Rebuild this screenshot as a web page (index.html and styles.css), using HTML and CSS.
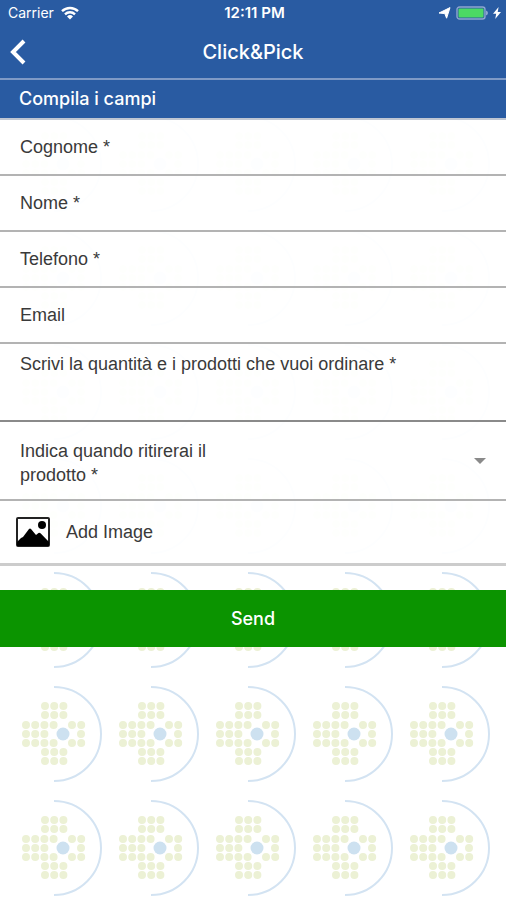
FILE: index.html
```
<!DOCTYPE html>
<html lang="it">
<head>
  <meta charset="UTF-8" />
  <meta name="viewport" content="width=device-width, initial-scale=1" />
  <title>Click&amp;Pick</title>
  <link rel="stylesheet" href="styles.css">
</head>
<body>

  <!-- Barra di stato -->
  <div class="status-bar">
    <div class="status-left">
      <span>Carrier</span>
      <svg width="18" height="14" viewBox="0 0 18 14" fill="none" stroke="#fff" stroke-width="2.4">
        <path d="M1 5.2a11.5 11.5 0 0 1 16 0" />
        <path d="M4 8.3a7.2 7.2 0 0 1 10 0" />
        <path d="M9 13.4L6 10.4a4.4 4.4 0 0 1 6 0z" fill="#fff" stroke="none" />
      </svg>
    </div>
    <span class="status-time">12:11 PM</span>
    <div class="status-right">
      <svg width="13" height="12" viewBox="0 0 13 12" fill="#fff">
        <path d="M12 .6L8.600 11.200 6.800 6.600 1 6z" stroke="#fff" stroke-width="1" stroke-linejoin="round" />
      </svg>
      <svg width="32" height="14" viewBox="0 0 32 14">
        <rect x="1" y="1" width="28" height="12" rx="2.5" fill="none" stroke="#8ea6cf" stroke-width="1.4" />
        <rect x="2.5" y="2.5" width="25" height="9" rx="1" fill="#4cd964" />
        <path d="M30 4.6q2 .6 2 2.4t-2 2.4z" fill="#8ea6cf" />
      </svg>
      <svg width="8" height="12" viewBox="0 0 8 12" fill="#fff">
        <path d="M5.6 0L0 6.8h3.2L2.2 12 8 4.9H4.7z" />
      </svg>
    </div>
  </div>

  <!-- Navigazione -->
  <header class="nav">
    <a class="back" href="#" aria-label="Indietro">
      <svg width="16" height="26" viewBox="0 0 16 26" fill="none" stroke="#fff" stroke-width="4">
        <path d="M14 2L3 13l11 11" />
      </svg>
    </a>
    <h1>Click&amp;Pick</h1>
  </header>

  <!-- Modulo -->
  <form>
    <h2 class="section-title">Compila i campi</h2>

    <div class="row">
      <label for="cognome">Cognome *</label>
      <input type="text" id="cognome" name="cognome" required>
    </div>
    <div class="row">
      <label for="nome">Nome *</label>
      <input type="text" id="nome" name="nome" required>
    </div>
    <div class="row">
      <label for="telefono">Telefono *</label>
      <input type="tel" id="telefono" name="telefono" required>
    </div>
    <div class="row">
      <label for="email">Email</label>
      <input type="email" id="email" name="email">
    </div>
    <div class="row row-text">
      <label for="ordine">Scrivi la quantità e i prodotti che vuoi ordinare *</label>
      <textarea id="ordine" name="ordine" rows="1" required></textarea>
    </div>
    <div class="row row-select">
      <label for="ritiro">Indica quando ritirerai il prodotto *</label>
      <select id="ritiro" name="ritiro" required>
        <option value=""></option>
      </select>
    </div>
    <button type="button" class="row row-image">
      <svg width="34" height="30" viewBox="0 0 34 30">
        <rect x="1" y="1" width="32" height="28" rx="1" fill="#fff" stroke="#222" stroke-width="2" />
        <path d="M1 25l4-4 2-1 6-8q1-1 2 0l5 6 2.500-2q1-.6 2 .3L33 25v4H1z" fill="#000" />
        <circle cx="26" cy="8" r="4" fill="#000" />
      </svg>
      <span>Add Image</span>
    </button>

    <button type="submit" class="send">Send</button>
  </form>

</body>
</html>
```
FILE: styles.css
```
* {
  box-sizing: border-box;
}
body {
  margin: 0;
  font-family: "Liberation Sans", Arial, sans-serif;
  font-size: 18px;
  line-height: 24px;
  color: #3a3a3a;
  background-color: #fff;
  background-image:
    linear-gradient(#fff, #fff),
    url("data:image/svg+xml,%3Csvg xmlns='http://www.w3.org/2000/svg' width='97' height='114'%3E%3Cpath d='M46 10a47 47 0 0 1 0 94' fill='none' stroke='%23d3e3f2' stroke-width='2'/%3E%3Cpath d='M37 29h19M37 38h19M18 48h30M64 48h10M18 57h20M73 57h1M18 66h30M64 66h10M37 75h19M37 84h19' fill='none' stroke='%23ecf1d5' stroke-width='8' stroke-linecap='round' stroke-dasharray='0 9.2'/%3E%3Ccircle cx='55' cy='57' r='6.500' fill='%23cde1f0'/%3E%3C/svg%3E");
  background-position: 0 0, 8px 107px;
  background-size: 8px 100%, auto;
  background-repeat: repeat-y, repeat;
}
.status-bar {
  display: grid;
  grid-template-columns: 1fr auto 1fr;
  align-items: center;
  height: 26px;
  padding: 0 5px 0 8px;
  background: #295ba2;
  color: #fff;
  font-family: Inter, sans-serif;
  font-size: 14px;
}
.status-left,
.status-right {
  display: flex;
  align-items: center;
}
.status-left {
  gap: 7px;
}
.status-right {
  justify-content: flex-end;
  gap: 5px;
}
.status-time {
  font-size: 15px;
  font-weight: 600;
}
.nav {
  display: grid;
  grid-template-columns: 40px 1fr 40px;
  align-items: center;
  height: 54px;
  border-bottom: 2px solid #7f9ac6;
  background: #295ba2;
  color: #fff;
}
.back {
  display: flex;
  padding-left: 10px;
}
.nav h1 {
  margin: 0;
  text-align: center;
  font-family: Inter, sans-serif;
  font-size: 20px;
  font-weight: 500;
}
.section-title {
  height: 40px;
  margin: 0;
  padding: 7px 19px;
  border-bottom: 2px solid #bfc6d2;
  background: #295ba2;
  color: #fff;
  font-family: Inter, sans-serif;
  font-size: 18px;
  font-weight: 500;
}
.row {
  display: flex;
  align-items: center;
  gap: 8px;
  min-height: 56px;
  padding: 0 20px;
  border-bottom: 2px solid #b3b3b3;
  background: rgba(255, 255, 255, 0.95);
}
.row input,
.row textarea,
.row select {
  flex: 1;
  min-width: 0;
  border: 0;
  outline: 0;
  background: transparent;
  font: inherit;
  color: inherit;
}
.row-text {
  flex-direction: column;
  align-items: stretch;
  min-height: 78px;
  padding-top: 8px;
  border-color: #8a8a8a;
}
.row-text textarea {
  padding: 0;
  resize: none;
}
.row-select {
  min-height: 79px;
}
.row-select label {
  flex: 0 0 200px;
  padding-top: 4px;
}
.row-select select {
  height: 48px;
  appearance: none;
  background: url("data:image/svg+xml,%3Csvg xmlns='http://www.w3.org/2000/svg' width='12' height='6'%3E%3Cpath d='M0 0h12L6 6z' fill='%238a8a8a'/%3E%3C/svg%3E") no-repeat right center;
}
.row-image {
  width: 100%;
  min-height: 65px;
  gap: 16px;
  padding: 0 16px;
  border: 0;
  border-bottom: 3px solid #ccc;
  font: inherit;
  color: inherit;
}
.send {
  display: block;
  width: 100%;
  height: 57px;
  margin-top: 24px;
  border: 0;
  background: #0b9400;
  color: #fff;
  font-family: Inter, sans-serif;
  font-size: 18px;
  font-weight: 500;
}
```
